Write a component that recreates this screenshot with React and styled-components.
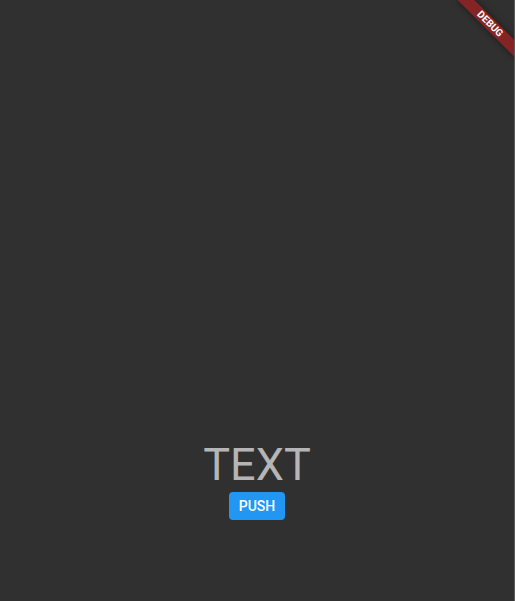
import React from "react";
import styled, { createGlobalStyle } from "styled-components";

const Global = createGlobalStyle`
  html, body { margin: 0; padding: 0; background: #303030; }
  #root { width: 515px; height: 601px; }
`;

const Screen = styled.div`
  position: relative;
  width: 515px;
  height: 601px;
  background: #303030;
  overflow: hidden;
  display: flex;
  box-sizing: border-box;
  border-right: 1px solid #5c5c5c;
  font-family: Roboto, "Liberation Sans", sans-serif;
`;

const Column = styled.div`
  flex: 1;
  display: flex;
  flex-direction: column;
  align-items: center;
  justify-content: flex-end;
  padding-bottom: 81px;
`;

const Title = styled.div`
  color: #b5b5b5;
  font-size: 45px;
  font-weight: 400;
  line-height: 53px;
  margin-bottom: 1px;
`;

const PushButton = styled.button`
  height: 28px;
  min-width: 56px;
  padding: 0 10px;
  border: none;
  border-radius: 4px;
  background: #2196f3;
  color: #ffffff;
  font-family: Roboto, "Liberation Sans", sans-serif;
  font-size: 14px;
  font-weight: 500;
  cursor: pointer;
`;

const Banner = styled.div`
  position: absolute;
  top: 18px;
  right: -16px;
  width: 80px;
  height: 12px;
  transform: rotate(45deg);
  background: rgb(133, 36, 36);
  box-shadow: 0 0 6px rgba(0, 0, 0, 0.5);
  color: #fff;
  font-family: Roboto, "Liberation Sans", sans-serif;
  font-weight: 700;
  font-size: 10px;
  line-height: 12px;
  text-align: center;
`;

export default function App() {
  return (
    <>
      <Global />
      <Screen>
        <Column>
          <Title>TEXT</Title>
          <PushButton>PUSH</PushButton>
        </Column>
        <Banner>DEBUG</Banner>
      </Screen>
    </>
  );
}
